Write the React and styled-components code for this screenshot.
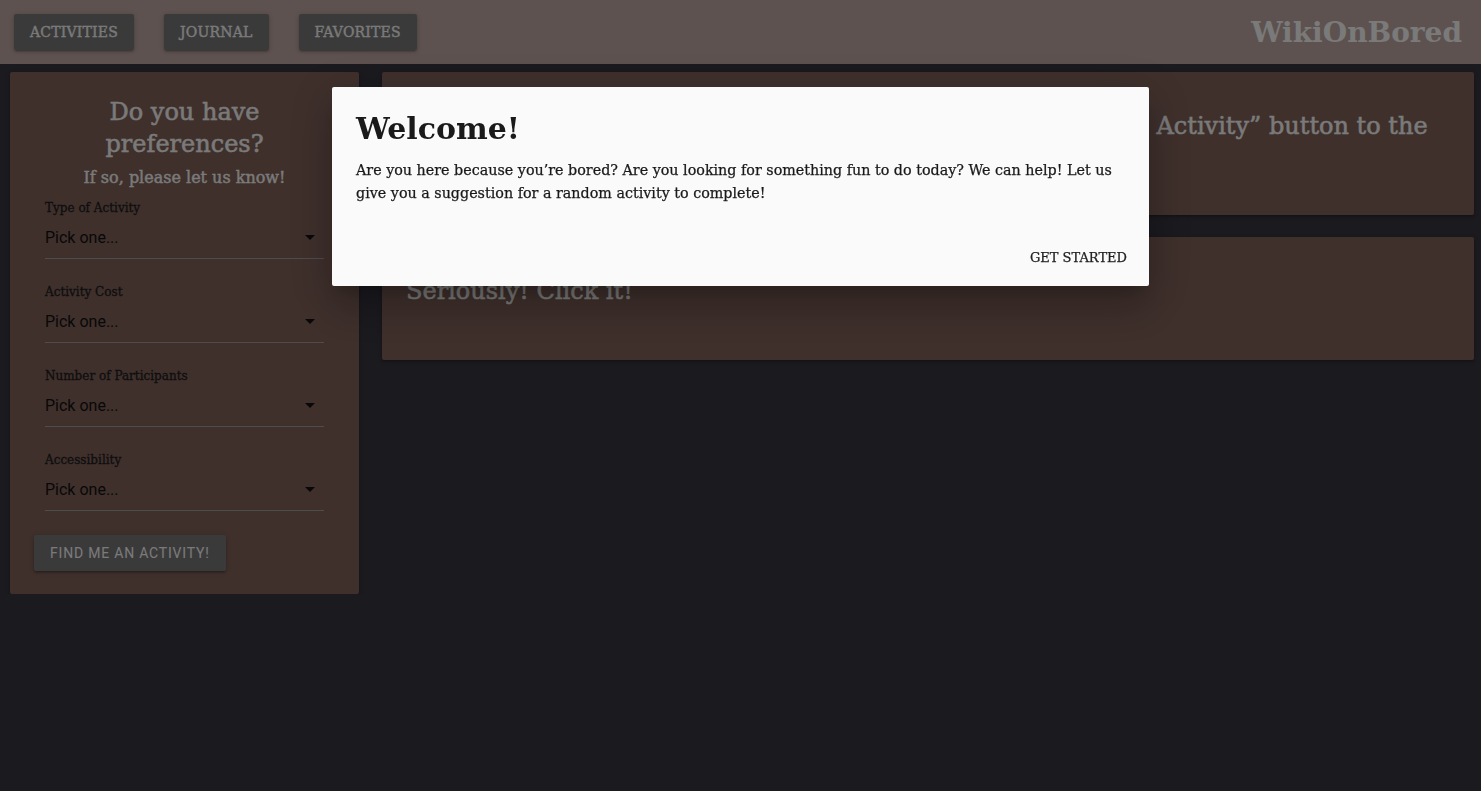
import React from 'react';
import styled, { createGlobalStyle } from 'styled-components';

const GlobalStyle = createGlobalStyle`
    html, body {
        margin: 0;
        padding: 0;
        background: #36343e;
        font-family: 'DejaVu Serif', 'Liberation Serif', serif;
    }
    * {
        box-sizing: border-box;
    }
`;

const SLAB = `'DejaVu Serif', 'Liberation Serif', serif`;
const SANS = `Roboto, 'Liberation Sans', sans-serif`;

const Header = styled.header`
    display: flex;
    align-items: center;
    height: 64px;
    padding: 0 19px 0 14px;
    background: #baa49e;
`;

const Nav = styled.nav`
    display: flex;
    gap: 30px;
`;

const NavButton = styled.button`
    height: 36px;
    padding: 0 16px;
    border: none;
    border-radius: 2px;
    background: #747474;
    color: #f4f4f4;
    font-family: ${SLAB};
    font-size: 14px;
    letter-spacing: 0.2px;
    -webkit-text-stroke: 0.35px #f4f4f4;
    text-transform: uppercase;
    box-shadow: 0 2px 2px 0 rgba(0, 0, 0, 0.14), 0 3px 1px -2px rgba(0, 0, 0, 0.12),
        0 1px 5px 0 rgba(0, 0, 0, 0.2);
`;

const Logo = styled.div`
    margin-left: auto;
    color: #f4f4f4;
    font-family: ${SLAB};
    font-size: 28px;
    font-weight: bold;
`;

const Main = styled.main`
    display: grid;
    grid-template-columns: 349px 1fr;
    gap: 23px;
    align-items: start;
    padding: 8px 7px 0 10px;
`;

const Panel = styled.section`
    padding: 24px 24px 23px;
    background: #7e6058;
    border-radius: 2px;
    box-shadow: 0 2px 2px 0 rgba(0, 0, 0, 0.14), 0 1px 5px 0 rgba(0, 0, 0, 0.2);
`;

const PanelTitle = styled.h2`
    margin: 0;
    color: #f4f4f4;
    font-size: 24px;
    font-weight: normal;
    -webkit-text-stroke: 0.5px #f4f4f4;
    line-height: 32px;
    text-align: center;
`;

const PanelSub = styled.h3`
    margin: 6px 0 0;
    color: #f4f4f4;
    font-size: 16px;
    font-weight: normal;
    -webkit-text-stroke: 0.4px #f4f4f4;
    line-height: 24px;
    text-align: center;
`;

const Field = styled.div`
    margin: ${(p) => (p.$first ? '10px' : '25px')} 11px 0;
`;

const Label = styled.label`
    display: block;
    color: #1c1c1c;
    font-size: 12px;
    -webkit-text-stroke: 0.3px #1c1c1c;
    line-height: 16px;
`;

const Select = styled.div`
    display: flex;
    align-items: center;
    justify-content: space-between;
    height: 43px;
    padding-right: 9px;
    border-bottom: 1px solid #9a9a9a;
    color: #111;
    font-family: ${SANS};
    font-size: 16px;
`;

const Caret = styled.span`
    width: 0;
    height: 0;
    border-left: 5px solid transparent;
    border-right: 5px solid transparent;
    border-top: 5px solid #111;
`;

const FindButton = styled.button`
    margin-top: 24px;
    height: 36px;
    padding: 0 16px;
    border: none;
    border-radius: 2px;
    background: #747474;
    color: #f4f4f4;
    font-family: ${SANS};
    font-size: 14px;
    letter-spacing: 0.8px;
    text-transform: uppercase;
    box-shadow: 0 2px 2px 0 rgba(0, 0, 0, 0.14), 0 3px 1px -2px rgba(0, 0, 0, 0.12),
        0 1px 5px 0 rgba(0, 0, 0, 0.2);
`;

const Column = styled.div`
    display: flex;
    flex-direction: column;
    gap: 22px;
`;

const Card = styled.section`
    padding: 24px 24px ${(p) => (p.$tall ? '39px' : '23px')};
    background: #7e6058;
    border-radius: 2px;
    box-shadow: 0 2px 2px 0 rgba(0, 0, 0, 0.14), 0 1px 5px 0 rgba(0, 0, 0, 0.2);
`;

const CardText = styled.h2`
    margin: 12px 0;
    color: #f4f4f4;
    font-size: 24px;
    font-weight: normal;
    -webkit-text-stroke: 0.5px #f4f4f4;
    line-height: 36px;
`;

const Overlay = styled.div`
    position: fixed;
    inset: 0;
    display: flex;
    justify-content: center;
    align-items: flex-start;
    padding-top: 87px;
    background: rgba(0, 0, 0, 0.5);
`;

const Modal = styled.div`
    width: 817px;
    background: #fafafa;
    border-radius: 2px;
    box-shadow: 0 24px 38px 3px rgba(0, 0, 0, 0.14), 0 9px 46px 8px rgba(0, 0, 0, 0.12),
        0 11px 15px -7px rgba(0, 0, 0, 0.2);
`;

const ModalBody = styled.div`
    padding: 24px;
`;

const ModalTitle = styled.h1`
    margin: 0;
    color: #1a1a1a;
    font-size: 30px;
    font-weight: bold;
    line-height: 36px;
`;

const ModalText = styled.p`
    margin: 12px 0 0;
    color: #1a1a1a;
    font-size: 14.3px;
    -webkit-text-stroke: 0.25px #1a1a1a;
    line-height: 23px;
`;

const ModalFooter = styled.div`
    display: flex;
    justify-content: flex-end;
    align-items: center;
    height: 57px;
    padding: 4px 6px;
`;

const FlatButton = styled.button`
    height: 36px;
    padding: 0 16px;
    border: none;
    background: transparent;
    color: #222;
    font-family: ${SLAB};
    font-size: 13px;
    -webkit-text-stroke: 0.25px #222;
    text-transform: uppercase;
`;

const fields = ['Type of Activity', 'Activity Cost', 'Number of Participants', 'Accessibility'];

export default function App() {
    return (
        <>
            <GlobalStyle />
            <Header>
                <Nav>
                    <NavButton>Activities</NavButton>
                    <NavButton>Journal</NavButton>
                    <NavButton>Favorites</NavButton>
                </Nav>
                <Logo>WikiOnBored</Logo>
            </Header>
            <Main>
                <Panel>
                    <PanelTitle>Do you have preferences?</PanelTitle>
                    <PanelSub>If so, please let us know!</PanelSub>
                    {fields.map((f, i) => (
                        <Field key={f} $first={i === 0}>
                            <Label>{f}</Label>
                            <Select>
                                Pick one...
                                <Caret />
                            </Select>
                        </Field>
                    ))}
                    <FindButton>Find me an activity!</FindButton>
                </Panel>
                <Column>
                    <Card>
                        <CardText>
                            Fill in your preferences (or don't!) and click the “Find Me An
                            Activity” button to the left to get a random activity.
                        </CardText>
                    </Card>
                    <Card $tall>
                        <CardText>Seriously! Click it!</CardText>
                    </Card>
                </Column>
            </Main>
            <Overlay>
                <Modal>
                    <ModalBody>
                        <ModalTitle>Welcome!</ModalTitle>
                        <ModalText>
                            Are you here because you’re bored? Are you looking for something fun to do
                            today? We can help! Let us give you a suggestion for a random activity to
                            complete!
                        </ModalText>
                    </ModalBody>
                    <ModalFooter>
                        <FlatButton>Get started</FlatButton>
                    </ModalFooter>
                </Modal>
            </Overlay>
        </>
    );
}
